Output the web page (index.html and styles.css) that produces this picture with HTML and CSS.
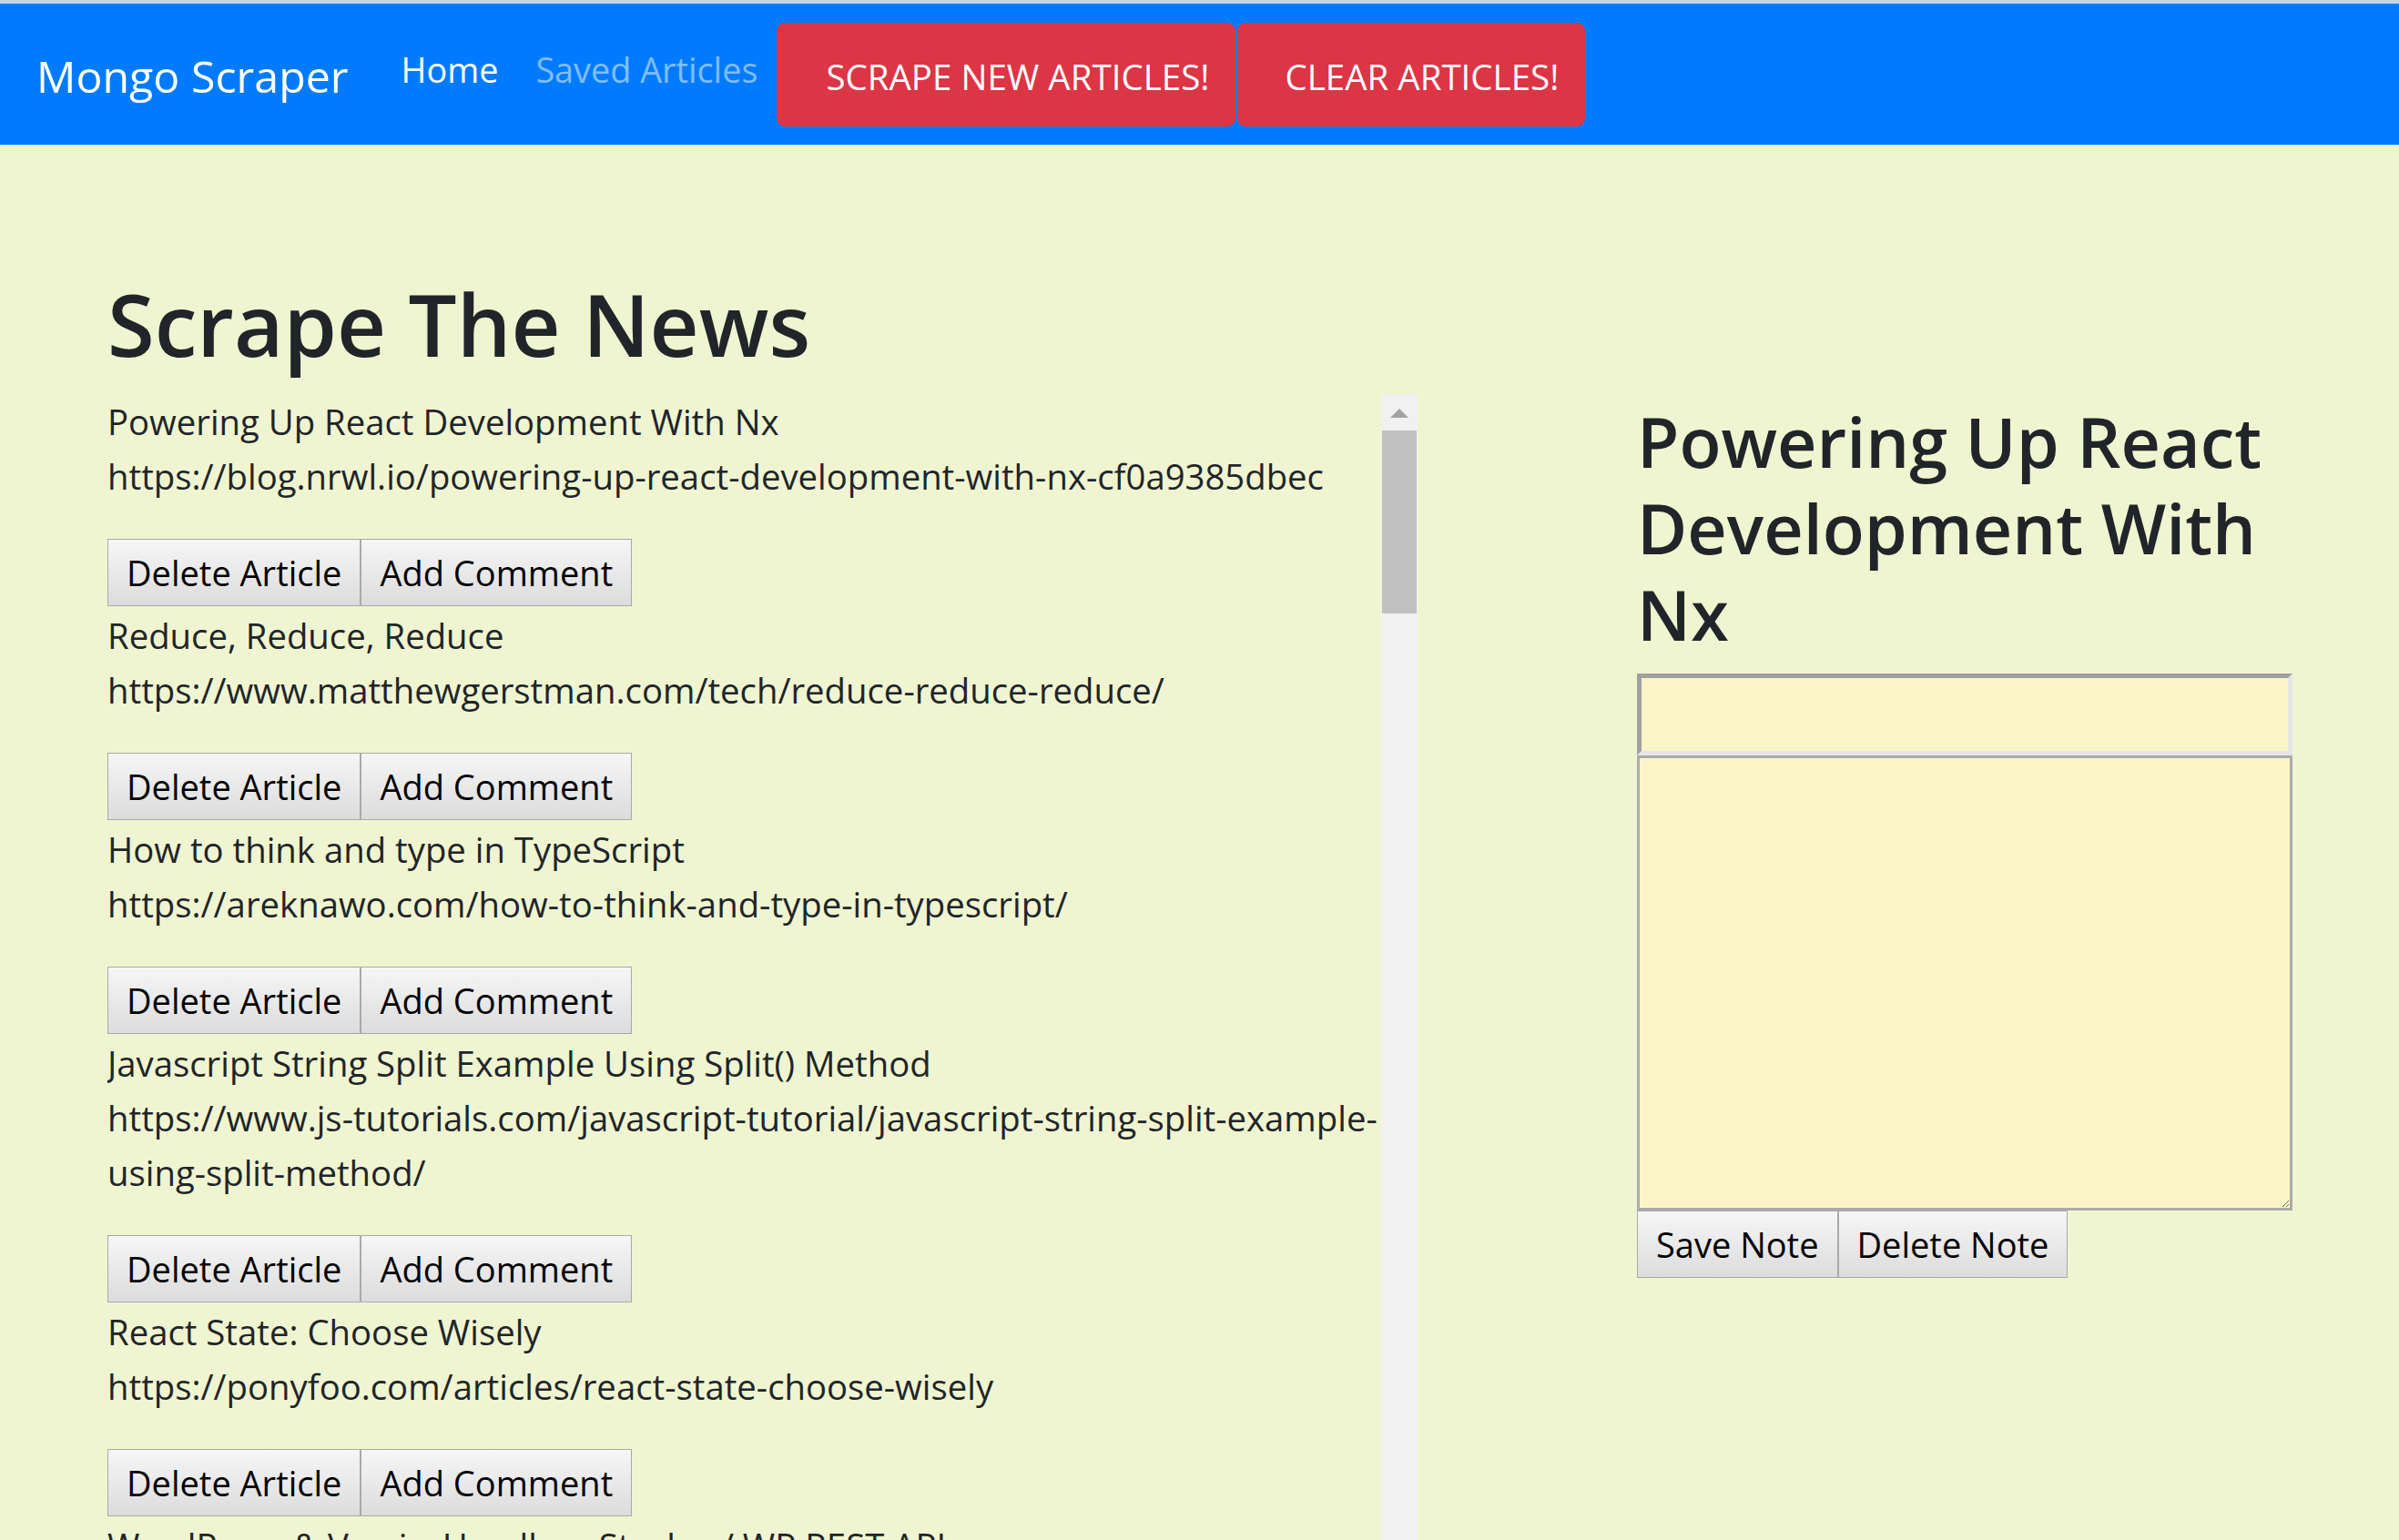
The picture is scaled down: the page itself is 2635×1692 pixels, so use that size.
FILE: index.html
```html
<!DOCTYPE html>
<html lang="en">
<head>
<meta charset="utf-8">
<title>Mongo Scraper</title>
<link rel="stylesheet" href="styles.css">
</head>
<body>
<div class="topline"></div>
<nav class="navbar">
  <a class="brand" href="#">Mongo Scraper</a>
  <a class="nav-link active" href="#">Home</a>
  <a class="nav-link muted" href="#">Saved Articles</a>
  <button class="btn-danger">SCRAPE NEW ARTICLES!</button>
  <button class="btn-danger second">CLEAR ARTICLES!</button>
</nav>
<main class="page">
  <h1 class="title">Scrape The News</h1>
  <div class="row">
    <div class="list-wrap">
      <section class="list">
        <div class="article"><div class="line">Powering Up React Development With Nx</div><div class="line">https://blog.nrwl.io/powering-up-react-development-with-nx-cf0a9385dbec</div><div class="actions"><button class="btn">Delete Article</button><button class="btn">Add Comment</button></div></div>
        <div class="article"><div class="line">Reduce, Reduce, Reduce</div><div class="line">https://www.matthewgerstman.com/tech/reduce-reduce-reduce/</div><div class="actions"><button class="btn">Delete Article</button><button class="btn">Add Comment</button></div></div>
        <div class="article"><div class="line">How to think and type in TypeScript</div><div class="line">https://areknawo.com/how-to-think-and-type-in-typescript/</div><div class="actions"><button class="btn">Delete Article</button><button class="btn">Add Comment</button></div></div>
        <div class="article"><div class="line">Javascript String Split Example Using Split() Method</div><div class="line">https://www.js-tutorials.com/javascript-tutorial/javascript-string-split-example-using-split-method/</div><div class="actions"><button class="btn">Delete Article</button><button class="btn">Add Comment</button></div></div>
        <div class="article"><div class="line">React State: Choose Wisely</div><div class="line">https://ponyfoo.com/articles/react-state-choose-wisely</div><div class="actions"><button class="btn">Delete Article</button><button class="btn">Add Comment</button></div></div>
        <div class="article"><div class="line">WordPress &amp; Vue.js: Headless Stack w/ WP REST API</div></div>
      </section>
      <div class="scrollbar" aria-hidden="true">
        <div class="scroll-up"><span class="scroll-arrow"></span></div>
        <div class="scroll-thumb"></div>
      </div>
    </div>
    <aside class="notes">
      <h2 class="note-title">Powering Up React Development With Nx</h2>
      <input class="note-input" type="text">
      <textarea class="note-body"></textarea>
      <div class="note-actions"><button class="btn">Save Note</button><button class="btn">Delete Note</button></div>
    </aside>
  </div>
</main>
</body>
</html>
```

FILE: styles.css
```css
html, body {
  margin: 0;
  height: 1692px;
  overflow: hidden;
}
body {
  background: #f0f5d1;
  font-family: "Open Sans", "Noto Sans", sans-serif;
  color: #212529;
}
.topline {
  height: 4px;
  background: #c7d3e2;
}
.navbar {
  height: 155px;
  background: #007bff;
  display: flex;
  align-items: flex-start;
  padding-left: 40px;
}
.brand {
  font-size: 48.3px;
  line-height: 70px;
  margin-top: 44px;
  margin-right: 58px;
  color: #fff;
  text-decoration: none;
}
.nav-link {
  font-size: 37.8px;
  line-height: 56px;
  margin-top: 45px;
  text-decoration: none;
}
.nav-link.active {
  color: #fff;
  margin-right: 41px;
}
.nav-link.muted {
  color: rgba(255, 255, 255, 0.5);
  margin-right: 21px;
}
.btn-danger {
  margin-top: 21px;
  height: 114px;
  padding: 4px 29px 0 54px;
  line-height: 110px;
  font-family: inherit;
  font-size: 38.5px;
  background: #dc3545;
  color: #fff;
  border: 0;
  border-radius: 9px;
}
.btn-danger.second {
  margin-left: 2px;
  padding-left: 52px;
}
.page {
  padding: 141px 0 0 118px;
}
.title {
  margin: 0 0 20px;
  font-size: 94px;
  font-weight: 600;
  line-height: 113px;
}
.row {
  display: flex;
  align-items: flex-start;
}
.list-wrap {
  flex: none;
  display: flex;
  width: 1439px;
  height: 1259px;
}
.list {
  flex: 1;
  min-width: 0;
  overflow: hidden;
  font-size: 38.3px;
}
.scrollbar {
  flex: none;
  width: 40px;
  background: #f1f1f1;
}
.scroll-up {
  height: 40px;
  padding-top: 16px;
  box-sizing: border-box;
}
.scroll-arrow {
  display: block;
  width: 0;
  height: 0;
  margin: 0 auto;
  border-left: 10px solid transparent;
  border-right: 10px solid transparent;
  border-bottom: 10px solid #a3a3a3;
}
.scroll-thumb {
  height: 201px;
  margin: 0 1px;
  background: #c1c1c1;
}
.line {
  line-height: 60px;
}
.actions {
  display: flex;
  margin: 39px 0 2px;
}
.btn {
  height: 74px;
  padding: 0 20px;
  font-family: "Open Sans", "Noto Sans", sans-serif;
  font-size: 38px;
  color: #000;
  border: 1px solid #a9a9a9;
  background: linear-gradient(#f6f6f6, #dcdcdc);
  border-radius: 0;
}
.notes {
  flex: none;
  width: 720px;
  margin-left: 241px;
}
.note-title {
  margin: 4px 0 18px;
  font-size: 75.5px;
  font-weight: 600;
  line-height: 95px;
}
.note-input {
  display: block;
  box-sizing: border-box;
  width: 720px;
  height: 90px;
  margin: 0;
  background: #fcf5c8;
  border-style: solid;
  border-width: 5px;
  border-color: #a0a0a0 #e6e6e6 #e6e6e6 #a0a0a0;
  font-family: inherit;
  font-size: 38px;
}
.note-body {
  display: block;
  box-sizing: border-box;
  width: 720px;
  height: 500px;
  margin: 0;
  background: #fcf5c8;
  border: 3px solid #ababab;
  font-family: inherit;
  font-size: 38px;
}
.note-actions {
  display: flex;
}
```
